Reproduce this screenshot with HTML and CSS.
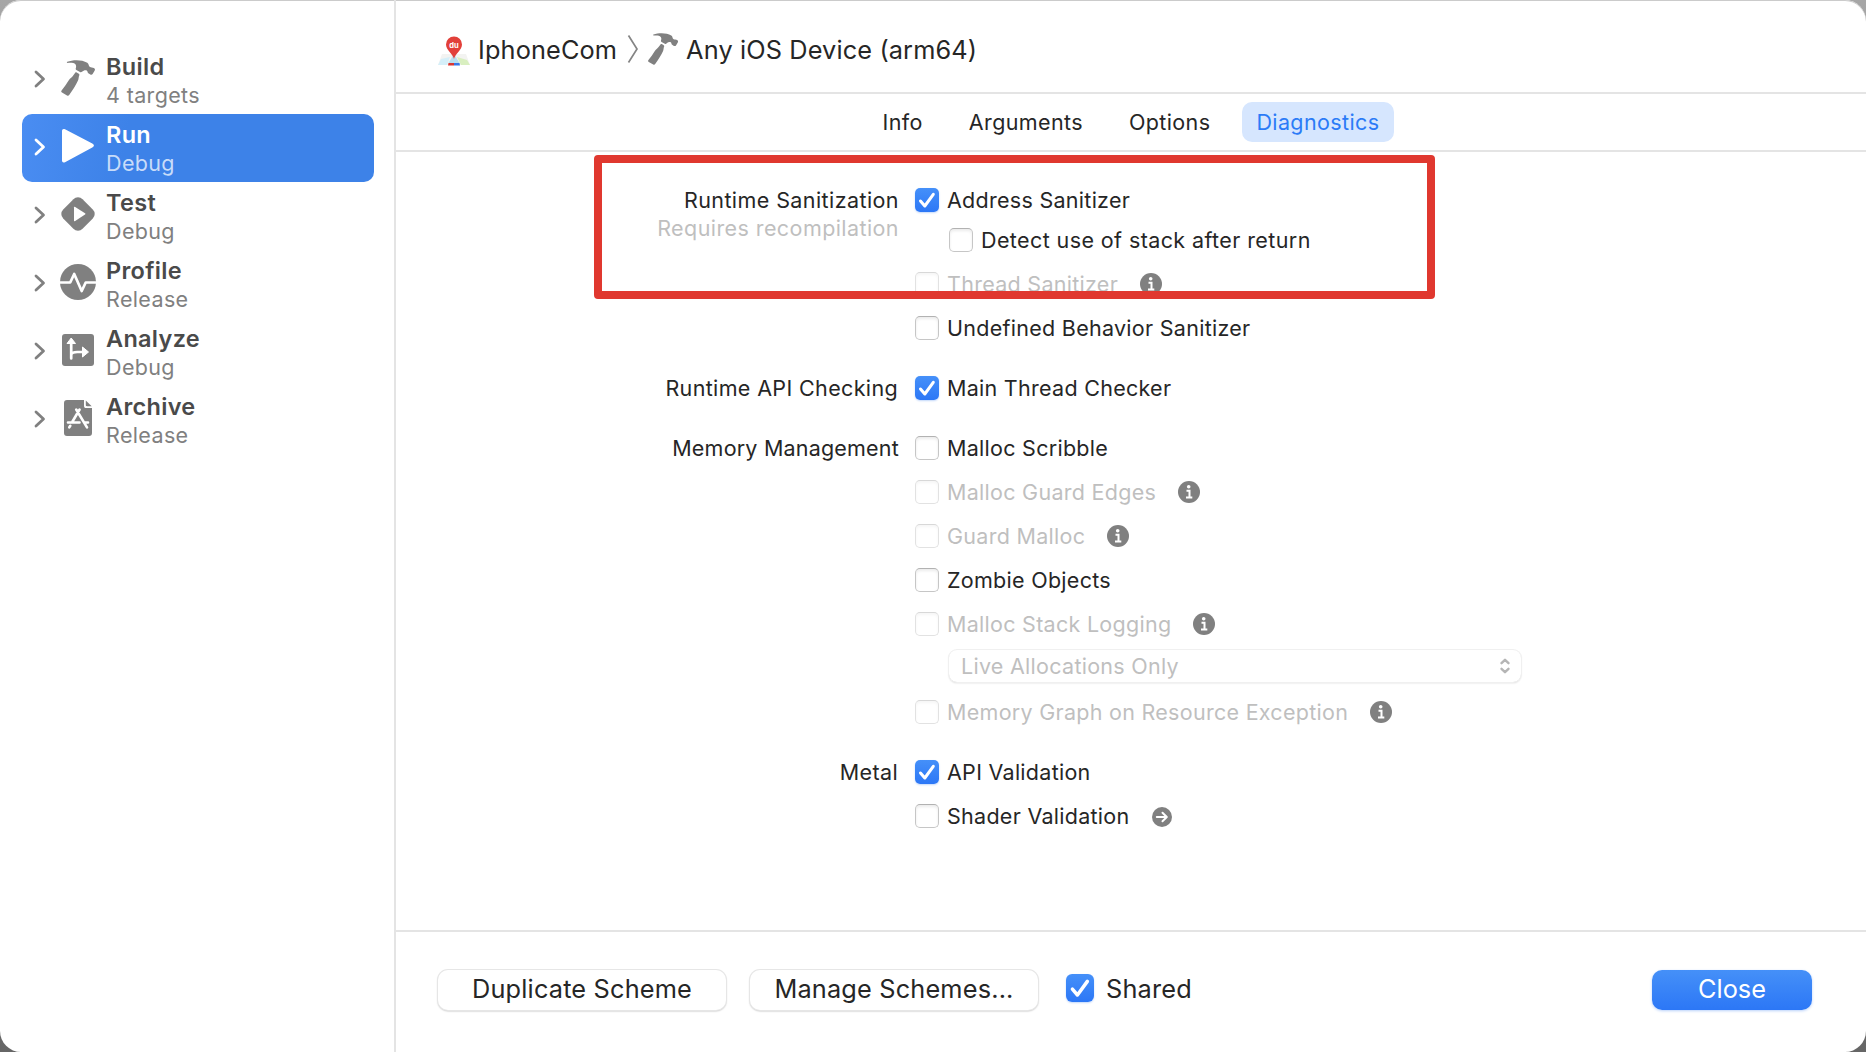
FILE: index.html
```html
<!DOCTYPE html>
<html lang="en">
<head>
<meta charset="utf-8">
<title>Scheme Editor</title>
<link rel="stylesheet" href="styles.css">
</head>
<body>
<svg class="defs" width="0" height="0">
  <symbol id="hammer" viewBox="0 0 36 36"><path d="M7.3 1.8C13-.4 22-.5 27.3 2.8c1.700 1.100 1.100 3 2.300 3.900 1.400.9 3 .5 4.300 1.300 1.300.8 1.300 1.700.7 2.800l-1.800 3c-.6 1-1.500 1.200-2.500.7l-2-1.200c-1.100-.8-.5-2.100-1.600-2.800-1.500-.7-3.400.1-4.700 1.300-.7.6-1.300.6-2 .2l-3.600-2c-.7-.4-.9-1-.6-1.800.8-2.300.1-4.300-2.500-5.100-1.900-.5-4-.5-5.600-.2-1 .1-1.200-.8-.4-1.100zM15.200 12.800c.4-.6.9-.6 1.500-.3l2.100 1.200c.6.4.7.900.5 1.500-.9 2.300-.4 3.500-1.300 5.300-2.300 5-5.600 10-8.800 14.500-.6.9-1.300 1-2.200.5l-5-3c-.9-.5-1-1.200-.4-2 2.600-3.300 5-6.600 7.200-10.200 1.400-2.300 3.500-3.300 4.200-4.600z"/></symbol>
  <symbol id="chevron" viewBox="0 0 12 18"><path d="M2 2l7.500 7L2 16" fill="none" stroke="currentColor" stroke-width="2.800" stroke-linecap="round" stroke-linejoin="round"/></symbol>
  <symbol id="check" viewBox="0 0 24 24"><path d="M5.500 13l4.300 5L18.300 6.300" fill="none" stroke="#fff" stroke-width="3" stroke-linecap="round" stroke-linejoin="round"/></symbol>
  <symbol id="info" viewBox="0 0 22 22"><circle cx="11" cy="11" r="11"/><circle cx="10.700" cy="5.700" r="1.800" fill="#fff"/><path d="M8.500 9.700h3v6.400M8 16.400h6.300" fill="none" stroke="#fff" stroke-width="2"/></symbol>
</svg>
<div class="window">
  <nav class="sidebar">
    <div class="action">
      <svg class="chev"><use href="#chevron"/></svg>
      <svg class="glyph"><use href="#hammer"/></svg>
      <div><div class="name">Build</div><div class="detail">4 targets</div></div>
    </div>
    <div class="action selected">
      <svg class="chev"><use href="#chevron"/></svg>
      <svg class="glyph" viewBox="0 0 36 36"><path d="M2 3c0-2 1.500-2.500 3-1.700L32.300 15.500c2.200 1.200 2.200 2.700 0 3.900L5 34.200c-1.500.8-3 .3-3-1.600z"/></svg>
      <div><div class="name">Run</div><div class="detail">Debug</div></div>
    </div>
    <div class="action">
      <svg class="chev"><use href="#chevron"/></svg>
      <svg class="glyph" viewBox="0 0 36 36"><rect x="4.300" y="4.300" width="27.400" height="27.400" rx="6.500" transform="rotate(45 18 18)"/><path d="M14 11.500c0-.8.500-1 1.200-.6l9.800 6.300c.6.400.6 1 0 1.400l-9.800 6.500c-.7.400-1.200.200-1.200-.6z" fill="#fff"/></svg>
      <div><div class="name">Test</div><div class="detail">Debug</div></div>
    </div>
    <div class="action">
      <svg class="chev"><use href="#chevron"/></svg>
      <svg class="glyph" viewBox="0 0 36 36"><circle cx="18" cy="18" r="18"/><path d="M0 18.500h10.200l4-8.500 7.500 17 4-8.500H36" fill="none" stroke="#fff" stroke-width="2.700" stroke-linejoin="round"/></svg>
      <div><div class="name">Profile</div><div class="detail">Release</div></div>
    </div>
    <div class="action">
      <svg class="chev"><use href="#chevron"/></svg>
      <svg class="glyph" viewBox="0 0 36 36"><rect x="2" y="2" width="32" height="32" rx="3"/><path d="M11.200 26.500V9M11.200 22.500c1-2.500 3-2.500 6-2.500h7" fill="none" stroke="#fff" stroke-width="2.700" stroke-linecap="round" stroke-linejoin="round"/><path d="M7 11.500l4.200-5.500 4.300 5.500zM22.500 15v10l6-5z" fill="#fff" stroke="#fff" stroke-linejoin="round"/></svg>
      <div><div class="name">Analyze</div><div class="detail">Debug</div></div>
    </div>
    <div class="action">
      <svg class="chev"><use href="#chevron"/></svg>
      <svg class="glyph" viewBox="0 0 36 36"><path d="M7 0h17v5.500C24 7.500 24.500 8 26.500 8H32v25c0 2-1 3-3 3H7c-2 0-3-1-3-3V3c0-2 1-3 3-3z"/><path d="M25.800 0.500L31.700 6.300H27c-.8 0-1.200-.4-1.200-1.200z"/><path d="M16.200 9.500L27 27.300M19.600 9.500L12.500 21.500M10.300 25.800l-1 1.500M8 22.500h11.500M24.500 22.500h3.500" fill="none" stroke="#fff" stroke-width="2.600" stroke-linecap="round"/></svg>
      <div><div class="name">Archive</div><div class="detail">Release</div></div>
    </div>
  </nav>
  <main class="editor">
    <header class="path">
      <svg class="app" viewBox="0 0 32 32"><path d="M4 20h24l4 11H0z" fill="#f3f3f1"/><path d="M0 31l3-6 9-2-3 8z" fill="#d5eff9"/><path d="M19 23l10 3 3 5h-9z" fill="#d9efc0"/><path d="M16 20l5.500 9h-11z" fill="#b9dff0"/><path d="M10.500 29H16v2.500h-6z" fill="#d93631"/><path d="M16 29h5.500l.5 2.500h-6z" fill="#3978e8"/><path d="M16 25c-.8-5-8-9-8-14.500a8 8 0 0 1 16 0C24 16 16.800 20 16 25z" fill="#e2403a"/><text class="pin" x="16" y="13.500" text-anchor="middle">du</text></svg>
      <span class="project">IphoneCom</span>
      <svg class="sep" viewBox="0 0 12 28"><path d="M1.500 .5L10 14 1.500 27.500" fill="none" stroke="#858585" stroke-width="1.700"/></svg>
      <svg class="tool"><use href="#hammer"/></svg>
      <span class="device">Any iOS Device (arm64)</span>
    </header>
    <div class="tabs">
      <span class="tab">Info</span>
      <span class="tab">Arguments</span>
      <span class="tab">Options</span>
      <span class="tab active">Diagnostics</span>
    </div>
    <div class="form">
      <div class="highlight"></div>
      <section class="group">
        <div class="label wide">Runtime Sanitization<div class="note">Requires recompilation</div></div>
        <div class="options">
          <div class="option"><span class="box on"><svg><use href="#check"/></svg></span>Address Sanitizer</div>
          <div class="option nested"><span class="box"></span>Detect use of stack after return</div>
          <div class="option off"><span class="box"></span>Thread Sanitizer<svg class="info"><use href="#info"/></svg></div>
          <div class="option"><span class="box"></span>Undefined Behavior Sanitizer</div>
        </div>
      </section>
      <section class="group">
        <div class="label">Runtime API Checking</div>
        <div class="options">
          <div class="option"><span class="box on"><svg><use href="#check"/></svg></span>Main Thread Checker</div>
        </div>
      </section>
      <section class="group">
        <div class="label tight">Memory Management</div>
        <div class="options">
          <div class="option"><span class="box"></span>Malloc Scribble</div>
          <div class="option off"><span class="box"></span>Malloc Guard Edges<svg class="info"><use href="#info"/></svg></div>
          <div class="option off"><span class="box"></span>Guard Malloc<svg class="info"><use href="#info"/></svg></div>
          <div class="option"><span class="box"></span>Zombie Objects</div>
          <div class="option off"><span class="box"></span>Malloc Stack Logging<svg class="info"><use href="#info"/></svg></div>
          <div class="select">Live Allocations Only<svg class="arrows" viewBox="0 0 12 18"><path d="M2.500 6.200L6 2.800l3.500 3.400M2.500 11.800L6 15.200l3.500-3.400" fill="none" stroke="#b5b5b5" stroke-width="2.400" stroke-linecap="round" stroke-linejoin="round"/></svg></div>
          <div class="option off"><span class="box"></span>Memory Graph on Resource Exception<svg class="info"><use href="#info"/></svg></div>
        </div>
      </section>
      <section class="group">
        <div class="label">Metal</div>
        <div class="options">
          <div class="option"><span class="box on"><svg><use href="#check"/></svg></span>API Validation</div>
          <div class="option"><span class="box"></span>Shader Validation<svg class="info go" viewBox="0 0 20 20"><circle cx="10" cy="10" r="10"/><path d="M4.800 10H14M10.500 5.800L14.800 10l-4.300 4.200" fill="none" stroke="#fff" stroke-width="2" stroke-linecap="round" stroke-linejoin="round"/></svg></div>
        </div>
      </section>
    </div>
    <footer class="footer">
      <button class="btn">Duplicate Scheme</button>
      <button class="btn">Manage Schemes...</button>
      <div class="shared"><span class="box on large"><svg><use href="#check"/></svg></span><span class="caption">Shared</span></div>
      <button class="btn primary">Close</button>
    </footer>
  </main>
</div>
</body>
</html>
```
FILE: styles.css
```css
* { box-sizing: border-box; }

body {
  margin: 0;
  height: 1052px;
  overflow: hidden;
  background: linear-gradient(#a6a6a6, #666);
  font: 21.5px/24px Inter, "Liberation Sans", sans-serif;
  letter-spacing: .3px;
  color: #262626;
}

.defs { position: absolute; }

.window {
  display: flex;
  height: 1052px;
  border-radius: 21px;
  background: #fff;
  box-shadow: inset 0 1px 0 #cbcbcb;
  overflow: hidden;
}

/* Sidebar */
.sidebar {
  width: 396px;
  padding: 46px 20px 0 22px;
  border-right: 2px solid #e4e4e4;
}

.action {
  display: flex;
  height: 68px;
  padding: 6px 0 0 12px;
  border-radius: 10px;
  color: #808080;
}

.chev { width: 12px; height: 18px; margin: 18px 14px 0 0; }
.glyph { width: 36px; height: 36px; margin: 8px 10px 0 0; fill: currentColor; }
.name { font-size: 23.5px; line-height: 29px; font-weight: 600; color: #4a4a4a; }
.detail { line-height: 28px; letter-spacing: .36px; }

.selected { background: linear-gradient(100deg, #4a8df2, #3d82e8 30%); color: #fff; }
.selected .name { color: #fff; }
.selected .detail { color: #c8dcf9; }

/* Header and tabs */
.editor { flex: 1; display: flex; flex-direction: column; }

.path {
  display: flex;
  align-items: center;
  height: 94px;
  padding: 8px 0 0 42px;
  border-bottom: 2px solid #e4e4e4;
  font-size: 25.3px;
  letter-spacing: .13px;
}

.app { width: 32px; height: 32px; margin-right: 8px; }
.pin { font: 700 7.500px Inter, sans-serif; fill: #fff; letter-spacing: 0; }
.sep { width: 12px; height: 28px; margin: 0 0 2px 10px; }
.tool { width: 32px; height: 32px; margin: 0 7px 2px 8px; fill: #808080; }

.tabs {
  display: flex;
  justify-content: center;
  align-items: center;
  gap: 17px;
  height: 58px;
  border-bottom: 2px solid #e4e4e4;
  letter-spacing: .38px;
}

.tab { padding: 8px 14.500px; border-radius: 10px; }
.tab.active { background: #d6e6fe; color: #2b7bf7; }

/* Diagnostics form */
.form {
  position: relative;
  flex: 1;
  display: flex;
  flex-direction: column;
  gap: 36px;
  padding-top: 36px;
}

.highlight {
  position: absolute;
  left: 198px;
  top: 3px;
  width: 841px;
  height: 144px;
  border: 8px solid #e0382f;
  border-radius: 4px;
}

.group { display: grid; grid-template-columns: 503px 1fr; column-gap: 16px; }
.label { text-align: right; padding-right: 1px; letter-spacing: .36px; }
.wide { padding-right: 0; letter-spacing: .42px; }
.tight { padding-right: 0; letter-spacing: .2px; }
.note { line-height: 32px; color: #bfbfbf; }
.options { display: flex; flex-direction: column; gap: 20px; letter-spacing: .28px; }
.option { display: flex; align-items: center; height: 24px; }
.nested { margin: -4px 0 0 34px; letter-spacing: .4px; }
.off { color: #bfbfbf; }

.box {
  width: 24px;
  height: 24px;
  margin-right: 8px;
  border: 1px solid #c6c6c6;
  border-top-color: #b2b2b2;
  border-radius: 5px;
  background: #fff;
  box-shadow: inset 0 2px 3px #ececec;
}

.off .box { border-color: #e2e2e2; border-top-color: #d8d8d8; box-shadow: inset 0 2px 3px #f6f6f6; }
.box.on { border: 0; background: linear-gradient(#4590f9, #2c77f6); box-shadow: 0 1px 2px #c3d8fa; }
.box svg { display: block; width: 100%; height: 100%; }
.box.large { width: 28px; height: 28px; margin-right: 12px; border-radius: 6px; }

.info { width: 22px; height: 22px; margin-left: 22px; fill: #808080; }
.go { width: 20px; height: 20px; margin: 2px 0 0 23px; }

.select {
  display: flex;
  justify-content: space-between;
  align-items: center;
  width: 572px;
  height: 32px;
  margin: -6px 0 -2px 34px;
  padding: 0 10px 0 12px;
  border-radius: 8px;
  box-shadow: 0 0 0 1px #f0f0f0, 0 1px 2px #d0d0d0;
  color: #bfbfbf;
}

.arrows { width: 12px; height: 18px; }

/* Footer */
.footer {
  display: flex;
  height: 122px;
  padding: 38px 54px 0 42px;
  border-top: 2px solid #e4e4e4;
  font-size: 25.3px;
  letter-spacing: .18px;
}

.btn {
  width: 288px;
  height: 40px;
  margin-right: 24px;
  padding: 0 0 2px;
  border: 0;
  border-radius: 10px;
  background: #fff;
  box-shadow: 0 0 0 1px #e6e6e6, 0 1px 2px #9c9c9c;
  font: inherit;
  letter-spacing: inherit;
  color: inherit;
}

.shared { display: flex; align-items: center; height: 36px; margin-left: 4px; }
.caption { padding-top: 2px; }

.primary {
  width: 160px;
  margin: 0 0 0 auto;
  background: linear-gradient(#4590f8, #2c77f6);
  box-shadow: 0 1px 3px #b9d1fa;
  letter-spacing: 0;
  color: #fff;
}
```
